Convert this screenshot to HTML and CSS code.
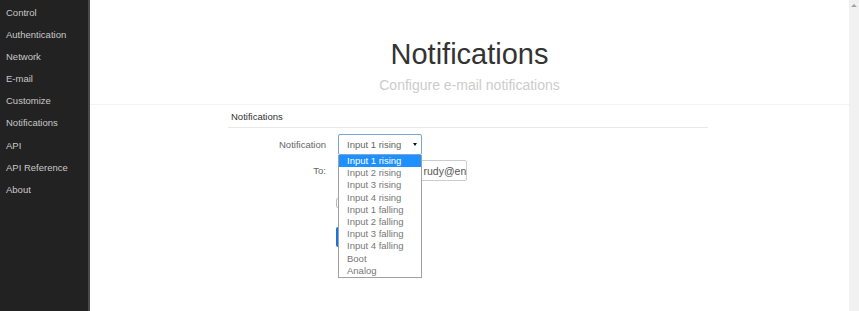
FILE: index.html
```html
<!DOCTYPE html>
<html lang="en">
<head>
    <meta charset="UTF-8">
    <title>Notifications</title>
    <link rel="stylesheet" href="styles.css">
</head>
<body>
    <div class="page">
        <nav class="sidebar">
            <a href="#">Control</a>
            <a href="#">Authentication</a>
            <a href="#">Network</a>
            <a href="#">E-mail</a>
            <a href="#">Customize</a>
            <a href="#">Notifications</a>
            <a href="#">API</a>
            <a href="#">API Reference</a>
            <a href="#">About</a>
        </nav>

        <main class="main">
            <div class="header">
                <h1>Notifications</h1>
                <h2>Configure e-mail notifications</h2>
            </div>

            <form class="form">
                <div class="legend">Notifications</div>

                <div class="row">
                    <label>Notification</label>
                    <div class="select-wrap">
                        <div class="select">
                            <span>Input 1 rising</span>
                            <span class="caret"></span>
                        </div>
                        <ul class="dropdown">
                            <li class="active">Input 1 rising</li>
                            <li>Input 2 rising</li>
                            <li>Input 3 rising</li>
                            <li>Input 4 rising</li>
                            <li>Input 1 falling</li>
                            <li>Input 2 falling</li>
                            <li>Input 3 falling</li>
                            <li>Input 4 falling</li>
                            <li>Boot</li>
                            <li>Analog</li>
                        </ul>
                    </div>
                </div>

                <div class="row">
                    <label>To:</label>
                    <input type="text" class="text-input" value="webmaster.info rudy@enterprise.com">
                </div>

                <div class="row">
                    <span class="spacer"></span>
                    <span class="checkbox"></span>
                </div>

                <div class="row">
                    <span class="spacer"></span>
                    <button type="button" class="save-btn" aria-label="Save"></button>
                </div>
            </form>
        </main>

        <div class="scrollbar">
            <span class="arrow"></span>
        </div>
    </div>
</body>
</html>
```

FILE: styles.css
```css
html, body {
    margin: 0;
    padding: 0;
    height: 100%;
}
body {
    font-family: 'Liberation Sans', Arial, sans-serif;
    background: #fff;
    color: #333;
}
.page {
    display: flex;
    height: 311px;
    overflow: hidden;
}
.sidebar {
    width: 88px;
    flex-shrink: 0;
    background: #222;
    border-right: 2px solid #4a4a4a;
    display: flex;
    flex-direction: column;
    padding-top: 7px;
}
.sidebar a {
    color: #c8c8c8;
    text-decoration: none;
    font-size: 9.5px;
    line-height: 12px;
    padding: 0 6px;
    margin-bottom: 10.1px;
}
.main {
    flex: 1;
    display: flex;
    flex-direction: column;
    align-items: center;
}
.header {
    align-self: stretch;
    text-align: center;
    padding-top: 38px;
    padding-bottom: 10px;
    border-bottom: 1px solid #f3f3f3;
}
.header h1 {
    margin: 0;
    font-size: 29px;
    font-weight: normal;
    line-height: 32px;
    color: #333;
}
.header h2 {
    margin: 7px 0 0;
    font-size: 14px;
    font-weight: normal;
    line-height: 17px;
    color: #ccc;
}
.form {
    width: 480px;
    margin-left: -3px;
    margin-top: 6px;
}
.legend {
    font-size: 9.5px;
    line-height: 12px;
    color: #333;
    padding: 0 0 4px 3px;
    border-bottom: 1px solid #e8e8e8;
    margin-bottom: 6px;
}
.row {
    display: flex;
    align-items: center;
    margin-bottom: 5px;
}
.row label,
.spacer {
    width: 98px;
    flex-shrink: 0;
    text-align: right;
    font-size: 9.5px;
    color: #666;
    margin-right: 12px;
}
.select-wrap {
    position: relative;
}
.select {
    width: 70px;
    height: 19px;
    border: 1px solid #7aa7d6;
    border-radius: 2px;
    display: flex;
    align-items: center;
    justify-content: space-between;
    padding: 0 4px 0 8px;
    font-size: 9.5px;
    color: #666;
}
.caret {
    width: 0;
    height: 0;
    border-left: 2.5px solid transparent;
    border-right: 2.5px solid transparent;
    border-top: 3px solid #111;
}
.dropdown {
    position: absolute;
    top: 21px;
    left: 0;
    width: 82px;
    margin: 0;
    padding: 0;
    list-style: none;
    background: #fff;
    border: 1px solid #a0a0a0;
    border-top: none;
    z-index: 2;
}
.dropdown li {
    font-size: 9.5px;
    line-height: 12.2px;
    padding-left: 8px;
    color: #777;
}
.dropdown li.active {
    background: #1e90ff;
    color: #fff;
}
.text-input {
    width: 129px;
    height: 21px;
    box-sizing: border-box;
    margin: 0;
    padding: 0 0 0 11px;
    border: 1px solid #ccc;
    border-radius: 2px;
    font-family: inherit;
    font-size: 10.5px;
    color: #555;
}
.checkbox {
    width: 8px;
    height: 8px;
    border: 1px solid #bbb;
    border-radius: 2px;
    margin: 12px 0 4px -2px;
}
.save-btn {
    margin: 10px 0 0 -2px;
    height: 20px;
    width: 60px;
    border: none;
    border-radius: 2px;
    background: #1a73d9;
    padding: 0;
}
.scrollbar {
    width: 10px;
    flex-shrink: 0;
    background: #f1f1f1;
    display: flex;
    justify-content: center;
    padding-top: 4px;
    box-sizing: border-box;
}
.arrow {
    width: 0;
    height: 0;
    border-left: 3px solid transparent;
    border-right: 3px solid transparent;
    border-bottom: 3px solid #a3a3a3;
}
```
